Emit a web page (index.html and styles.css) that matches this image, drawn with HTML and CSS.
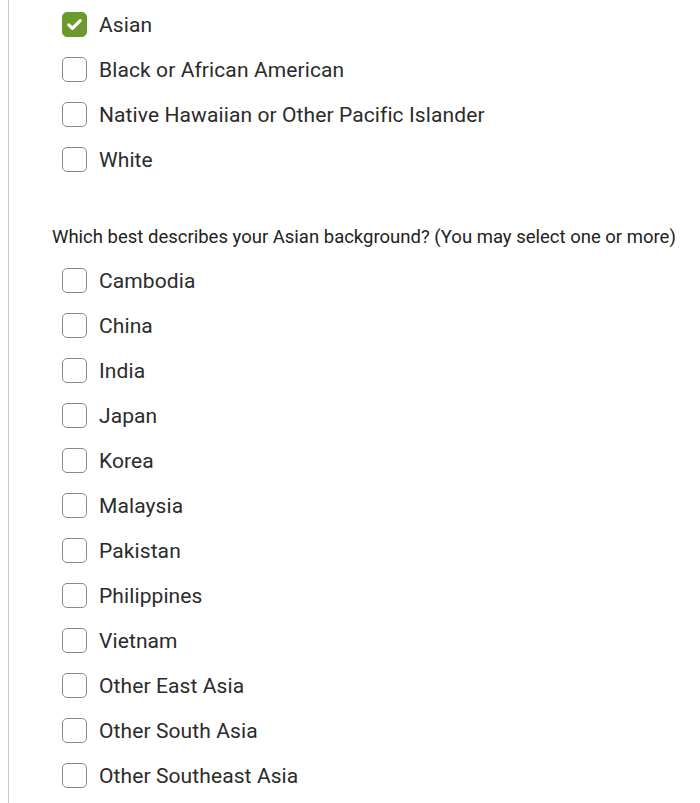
FILE: index.html
```html
<!DOCTYPE html>
<html>
<head>
  <meta charset="utf-8">
  <link rel="stylesheet" href="styles.css">
</head>
<body>
  <div class="panel">
    <div class="options">
      <label class="option">
        <span class="box checked">
          <svg width="19" height="19" viewBox="0 0 16 16"><path d="M3.2 8.3l3.1 3L12.8 4.8" fill="none" stroke="#fff" stroke-width="2.7" stroke-linecap="round" stroke-linejoin="round"/></svg>
        </span>
        <span class="text">Asian</span>
      </label>
      <label class="option"><span class="box"></span><span class="text">Black or African American</span></label>
      <label class="option"><span class="box"></span><span class="text">Native Hawaiian or Other Pacific Islander</span></label>
      <label class="option"><span class="box"></span><span class="text">White</span></label>
    </div>

    <div class="question">Which best describes your Asian background? (You may select one or more)</div>

    <div class="options">
      <label class="option"><span class="box"></span><span class="text">Cambodia</span></label>
      <label class="option"><span class="box"></span><span class="text">China</span></label>
      <label class="option"><span class="box"></span><span class="text">India</span></label>
      <label class="option"><span class="box"></span><span class="text">Japan</span></label>
      <label class="option"><span class="box"></span><span class="text">Korea</span></label>
      <label class="option"><span class="box"></span><span class="text">Malaysia</span></label>
      <label class="option"><span class="box"></span><span class="text">Pakistan</span></label>
      <label class="option"><span class="box"></span><span class="text">Philippines</span></label>
      <label class="option"><span class="box"></span><span class="text">Vietnam</span></label>
      <label class="option"><span class="box"></span><span class="text">Other East Asia</span></label>
      <label class="option"><span class="box"></span><span class="text">Other South Asia</span></label>
      <label class="option"><span class="box"></span><span class="text">Other Southeast Asia</span></label>
    </div>
  </div>
</body>
</html>
```

FILE: styles.css
```css
body {
  margin: 0;
  background: #fff;
  font-family: Roboto, 'Liberation Sans', sans-serif;
  color: #2b2b2b;
  overflow: hidden;
}

.panel {
  margin-left: 8px;
  border-left: 1px solid #c8c8c8;
  min-height: 803px;
  padding-left: 43px;
}

.options {
  display: flex;
  flex-direction: column;
  padding-left: 10px;
}

.option {
  display: flex;
  align-items: center;
  gap: 12px;
  height: 45px;
  cursor: pointer;
}

.option:first-child {
  margin-top: 2px;
}

.box {
  width: 23px;
  height: 23px;
  border: 1.5px solid #8a8a8a;
  border-radius: 5px;
  display: flex;
  align-items: center;
  justify-content: center;
  flex-shrink: 0;
}

.box.checked {
  background: #6b9a2c;
  border-color: #6b9a2c;
}

.text {
  font-size: 21px;
  letter-spacing: 0.1px;
}

.question {
  font-size: 18.5px;
  color: #222;
  margin-top: 44px;
  margin-bottom: 8px;
  white-space: nowrap;
}
```
